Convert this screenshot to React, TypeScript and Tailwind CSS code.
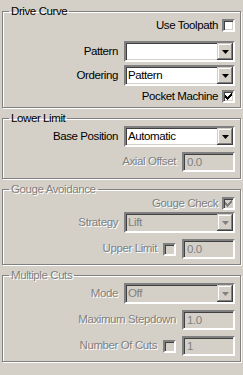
const FACE = '#d4d0c8'

function Sunken({ className, children, disabled }: { className: string; children?: React.ReactNode; disabled?: boolean }) {
  return (
    <div
      className={`${className} border-2 border-t-[#808080] border-l-[#808080] border-b-white border-r-white shadow-[inset_1px_1px_0_#404040,inset_-1px_-1px_0_#d4d0c8] ${
        disabled ? 'bg-[#d4d0c8]' : 'bg-white'
      }`}
    >
      {children}
    </div>
  )
}

function Label({ text, disabled }: { text: string; disabled?: boolean }) {
  return (
    <span className={disabled ? 'text-[#808080] [text-shadow:1px_1px_0_#fff]' : 'text-black'}>{text}</span>
  )
}

function Check({ checked, disabled }: { checked?: boolean; disabled?: boolean }) {
  return (
    <Sunken className="w-[13px] h-[13px] flex items-center justify-center shrink-0" disabled={disabled}>
      {checked && (
        <svg width="7" height="7" viewBox="0 0 7 7">
          <path d="M0 2h1v1h1v1h1V3h1V2h1V1h1V0h1v3H6v1H5v1H4v1H3v1H2V6H1V5H0z" fill={disabled ? '#808080' : '#000'} />
        </svg>
      )}
    </Sunken>
  )
}

function Combo({ value, disabled }: { value: string; disabled?: boolean }) {
  return (
    <Sunken className="w-[111px] h-[21px] flex items-stretch p-0" disabled={disabled}>
      <div className={`flex-1 pl-[2px] leading-[17px] ${disabled ? 'text-[#808080]' : 'text-black'}`}>{value}</div>
      <div className="w-[16px] h-[17px] bg-[#d4d0c8] shadow-[inset_-1px_-1px_0_#404040,inset_1px_1px_0_#d4d0c8,inset_-2px_-2px_0_#808080,inset_2px_2px_0_#fff] flex items-center justify-center">
        <svg width="7" height="4" viewBox="0 0 7 4">
          <path d="M0 0h7L3.5 4z" fill={disabled ? '#808080' : '#000'} />
        </svg>
      </div>
    </Sunken>
  )
}

function Edit({ value }: { value: string }) {
  return (
    <Sunken className="w-[53px] h-[20px] pl-[3px] leading-[16px] text-[#808080]" disabled>
      {value}
    </Sunken>
  )
}

function Group({ title, disabled, className, children }: { title: string; disabled?: boolean; className: string; children: React.ReactNode }) {
  return (
    <fieldset
      className={`${className} mx-[2px] border border-[#808080] shadow-[inset_1px_1px_0_#fff,1px_1px_0_#fff] pr-[5px]`}
    >
      <legend className="ml-[6px] px-[2px] leading-[14px]">
        <Label text={title} disabled={disabled} />
      </legend>
      {children}
    </fieldset>
  )
}

function Row({ className, children }: { className: string; children: React.ReactNode }) {
  return <div className={`${className} flex items-center justify-end`}>{children}</div>
}

export default function App() {
  return (
    <div
      className="w-[243px] h-[375px] bg-[#d4d0c8] overflow-hidden pt-[4px] text-[11.5px] tracking-[-0.4px]"
      style={{ fontFamily: '"Liberation Sans", Arial, sans-serif', backgroundColor: FACE }}
    >
      <Group title="Drive Curve" className="pb-[3px]">
        <Row className="h-[15px] gap-[4px]">
          <Label text="Use Toolpath" />
          <Check />
        </Row>
        <Row className="h-[21px] mt-[8px] gap-[6px]">
          <Label text="Pattern" />
          <Combo value="" />
        </Row>
        <Row className="h-[21px] mt-[3px] gap-[6px]">
          <Label text="Ordering" />
          <Combo value="Pattern" />
        </Row>
        <Row className="h-[15px] mt-[3px] gap-[4px]">
          <Label text="Pocket Machine" />
          <Check checked />
        </Row>
      </Group>

      <Group title="Lower Limit" className="mt-[3px] pb-[6px]">
        <Row className="h-[21px] mt-[1px] gap-[6px]">
          <Label text="Base Position" />
          <Combo value="Automatic" />
        </Row>
        <Row className="h-[20px] mt-[5px] gap-[6px]">
          <Label text="Axial Offset" disabled />
          <Edit value="0.0" />
        </Row>
      </Group>

      <Group title="Gouge Avoidance" disabled className="mt-[3px] pb-[5px]">
        <Row className="h-[15px] gap-[4px]">
          <Label text="Gouge Check" disabled />
          <Check checked disabled />
        </Row>
        <Row className="h-[21px] mt-[1px] gap-[6px]">
          <Label text="Strategy" disabled />
          <Combo value="Lift" disabled />
        </Row>
        <Row className="h-[20px] mt-[6px] gap-[6px]">
          <Label text="Upper Limit" disabled />
          <Check disabled />
          <Edit value="0.0" />
        </Row>
      </Group>

      <Group title="Multiple Cuts" disabled className="mt-[3px] pb-[5px]">
        <Row className="h-[21px] mt-[1px] gap-[6px]">
          <Label text="Mode" disabled />
          <Combo value="Off" disabled />
        </Row>
        <Row className="h-[20px] mt-[6px] gap-[6px]">
          <Label text="Maximum Stepdown" disabled />
          <Edit value="1.0" />
        </Row>
        <Row className="h-[20px] mt-[6px] gap-[6px]">
          <Label text="Number Of Cuts" disabled />
          <Check disabled />
          <Edit value="1" />
        </Row>
      </Group>
    </div>
  )
}
